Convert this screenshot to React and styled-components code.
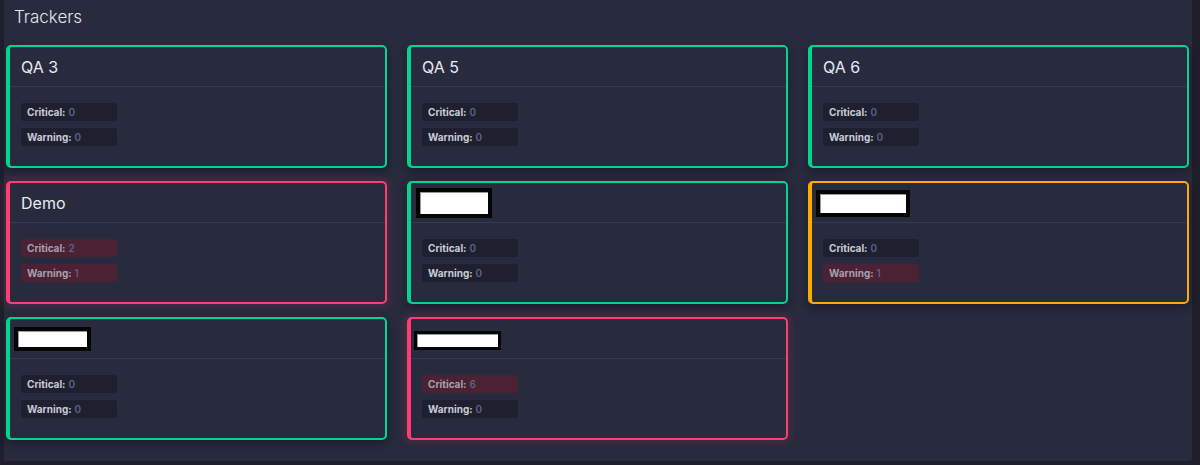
import React from "react";
import styled, { createGlobalStyle, css } from "styled-components";

const GlobalStyle = createGlobalStyle`
  html, body { margin: 0; padding: 0; background: #1e1f2b; }
  body { font-family: "Inter", "Open Sans", sans-serif; width: 1200px; height: 465px; overflow: hidden; }
`;

const COLORS = {
  success: "#00d68f",
  danger: "#ff3d71",
  warning: "#ffaa00",
};

const Panel = styled.section`
  margin-left: 4px;
  width: 1188px;
  height: 461px;
  box-sizing: border-box;
  background: #282a3d;
  padding: 0 3px 0 2px;
  border-bottom-right-radius: 3px;
`;

const Heading = styled.h1`
  margin: 0;
  height: 45px;
  padding: 7px 0 0 8px;
  box-sizing: border-box;
  font-size: 17px;
  font-weight: 300;
  color: #e4e6f0;
`;

const Grid = styled.div`
  display: grid;
  grid-template-columns: repeat(3, 381px);
  column-gap: 20px;
  row-gap: 13px;
  grid-auto-rows: 123px;
`;

const Card = styled.article`
  box-sizing: border-box;
  background: #282a3d;
  border: 2px solid ${(p) => COLORS[p.$status]};
  border-left-width: 4px;
  border-radius: 5px;
  display: flex;
  flex-direction: column;
  ${(p) =>
    p.$status === "danger"
      ? css`box-shadow: 0 0 6px 5px rgba(255, 61, 113, 0.09);`
      : css`box-shadow: 0 4px 10px rgba(0, 0, 0, 0.28);`}
`;

const CardHeader = styled.header`
  height: 39px;
  flex: none;
  display: flex;
  align-items: center;
  padding-left: 11px;
  border-bottom: 1px solid #363a52;
`;

const Title = styled.h2`
  margin: 0;
  font-size: 16px;
  font-weight: 400;
  color: #e8eaf2;
`;

const Redacted = styled.div`
  box-sizing: border-box;
  width: ${(p) => p.$w}px;
  height: ${(p) => p.$h}px;
  margin-left: ${(p) => p.$x}px;
  margin-top: ${(p) => p.$y || 0}px;
  background: #ffffff;
  border: ${(p) => (p.$h > 22 ? 4 : 3)}px solid #050505;
  box-shadow: inset 1px 1px 0 #9a9a9a;
`;

const CardBody = styled.div`
  padding: 16px 0 0 11px;
  display: flex;
  flex-direction: column;
  gap: 7px;
`;

const Badge = styled.div`
  width: 96px;
  height: 18px;
  box-sizing: border-box;
  padding-left: 6px;
  border-radius: 3px;
  display: flex;
  align-items: center;
  gap: 3px;
  font-size: 10px;
  background: ${(p) => (p.$alert ? "#4a2234" : "#1e2030")};
`;

const Label = styled.span`
  font-weight: 700;
  color: ${(p) => (p.$alert ? "#a8a0b0" : "#c9ccd8")};
`;

const Count = styled.span`
  font-weight: 600;
  color: #5b6289;
`;

const trackers = [
  { title: "QA 3", status: "success", critical: 0, warning: 0 },
  { title: "QA 5", status: "success", critical: 0, warning: 0 },
  { title: "QA 6", status: "success", critical: 0, warning: 0 },
  { title: "Demo", status: "danger", critical: 2, warning: 1 },
  { redact: { w: 76, h: 30, x: -6, y: 1 }, status: "success", critical: 0, warning: 0 },
  { redact: { w: 94, h: 27, x: -7, y: 2 }, status: "warning", critical: 0, warning: 1 },
  { redact: { w: 77, h: 24, x: -7, y: 0 }, status: "success", critical: 0, warning: 0 },
  { redact: { w: 87, h: 19, x: -8, y: 3 }, status: "danger", critical: 6, warning: 0 },
];

function Tracker({ t }) {
  return (
    <Card $status={t.status}>
      <CardHeader>
        {t.redact ? (
          <Redacted $w={t.redact.w} $h={t.redact.h} $x={t.redact.x} $y={t.redact.y} />
        ) : (
          <Title>{t.title}</Title>
        )}
      </CardHeader>
      <CardBody>
        <Badge $alert={t.critical > 0}>
          <Label $alert={t.critical > 0}>Critical:</Label>
          <Count>{t.critical}</Count>
        </Badge>
        <Badge $alert={t.warning > 0}>
          <Label $alert={t.warning > 0}>Warning:</Label>
          <Count>{t.warning}</Count>
        </Badge>
      </CardBody>
    </Card>
  );
}

export default function App() {
  return (
    <>
      <GlobalStyle />
      <Panel>
        <Heading>Trackers</Heading>
        <Grid>
          {trackers.map((t, i) => (
            <Tracker key={i} t={t} />
          ))}
        </Grid>
      </Panel>
    </>
  );
}
